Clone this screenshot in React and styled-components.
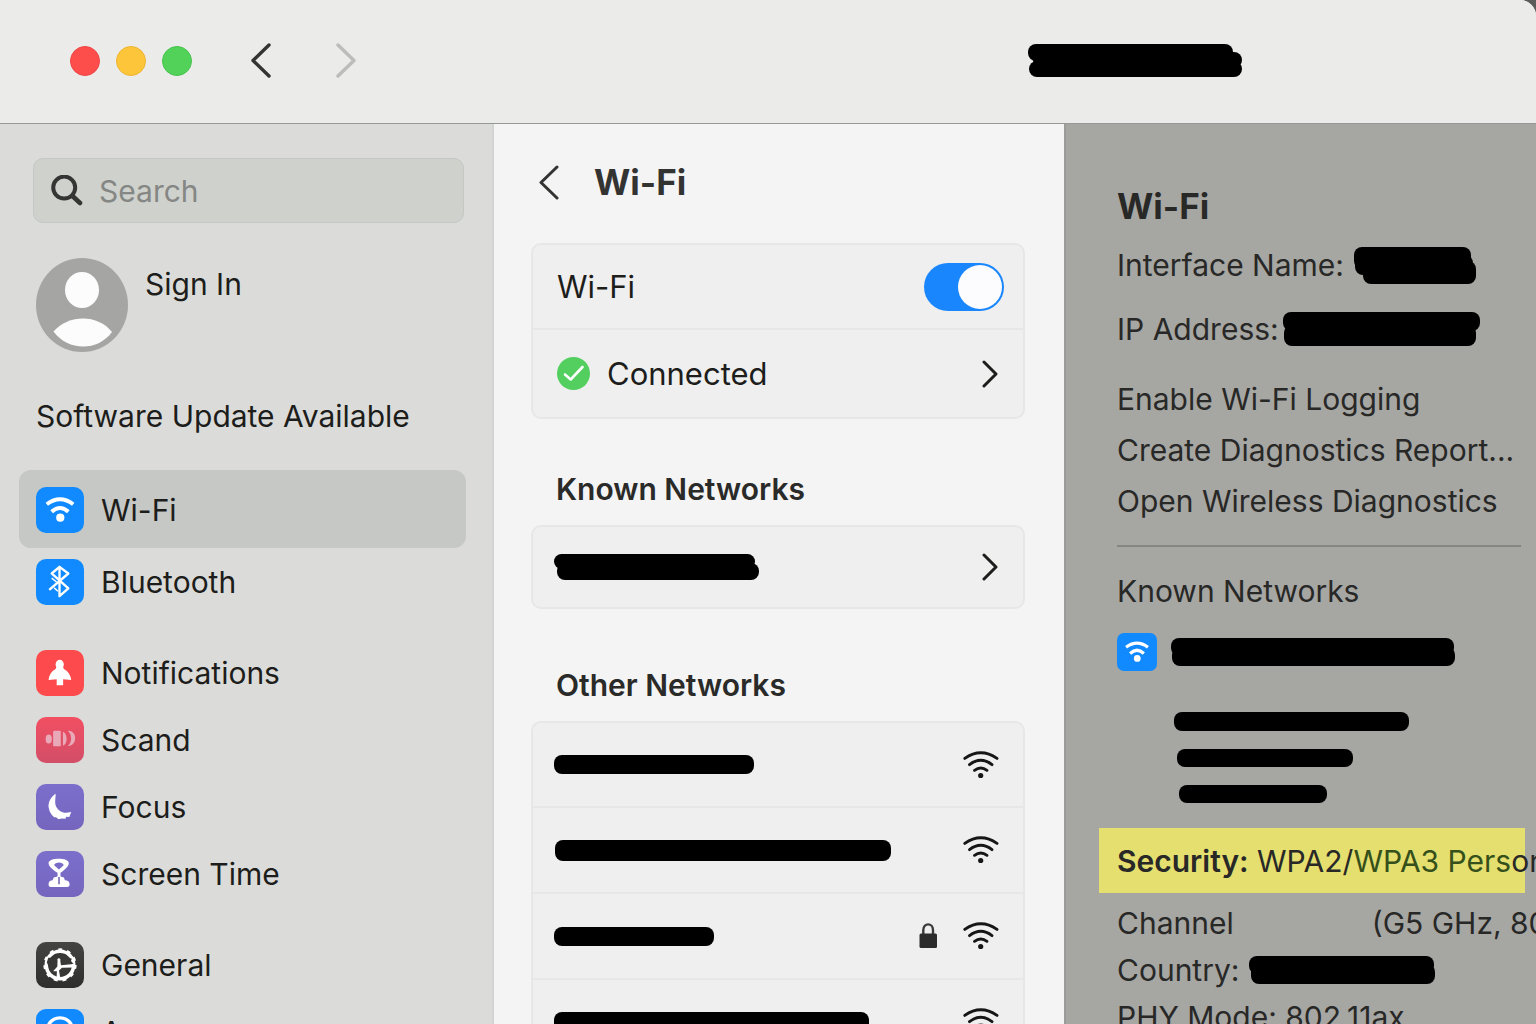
import React from "react";
import styled, { createGlobalStyle, css } from "styled-components";

const GlobalStyle = createGlobalStyle`
    * {
        box-sizing: border-box;
    }

    body {
        margin: 0;
        background-color: #5c5c5c;
        font-family: Inter, "Liberation Sans", sans-serif;
        font-size: 30px;
        line-height: 40px;
        color: #1d1d1b;
    }

    h1, h2, h3, p, ul {
        margin: 0;
        padding: 0;
    }

    button {
        padding: 0;
        border: 0;
        background: none;
        color: inherit;
        font: inherit;
        text-align: left;
        cursor: pointer;
    }
`;

const Window = styled.div`
    display: flex;
    flex-direction: column;
    height: 100vh;
    border-top-right-radius: 16px;
    background-color: #f4f4f4;
    overflow: hidden;
`;

const TitleBar = styled.header`
    display: flex;
    flex: none;
    align-items: center;
    height: 124px;
    padding: 0 294px 2px 70px;
    background-color: #ebebe9;
    border-bottom: 1px solid #969a97;
`;

const Lights = styled.div`
    display: flex;
    gap: 16px;
    margin-right: 59px;
`;

const Light = styled.button`
    width: 30px;
    height: 30px;
    border-radius: 50%;
    border: 1px solid ${(props) => props.$edge};
    background-color: ${(props) => props.$color};
`;

const HistoryButtons = styled.div`
    display: flex;
    gap: 65px;
    margin-right: auto;
`;

const IconButton = styled.button`
    display: flex;
    color: ${(props) => (props.disabled ? "#bcbcba" : "#333332")};
`;

const Body = styled.div`
    display: grid;
    flex: 1;
    grid-template-columns: 494px minmax(0, 1fr) 472px;
    min-height: 0;
`;

const Sidebar = styled.aside`
    padding: 34px 26px 0 19px;
    background-color: #dbdcd9;
    border-right: 2px solid #d2d4d1;
    overflow: hidden;
`;

const SearchBox = styled.label`
    display: flex;
    align-items: center;
    gap: 16px;
    height: 65px;
    margin: 0 2px 0 14px;
    padding: 0 17px;
    border: 1px solid #c4c7c4;
    border-radius: 10px;
    background-color: #cfd1cd;
`;

const SearchInput = styled.input`
    flex: 1;
    min-width: 0;
    padding: 0;
    border: 0;
    outline: none;
    background: none;
    color: #1d1d1b;
    font: inherit;

    &::placeholder {
        color: #858784;
        opacity: 1;
    }
`;

const Account = styled.button`
    display: flex;
    gap: 17px;
    margin: 35px 0 0 17px;
    line-height: 52px;
`;

const UpdateLink = styled.a`
    display: block;
    margin: 44px 0 34px 17px;
    color: inherit;
    text-decoration: none;
`;

const NavGroup = styled.ul`
    list-style: none;

    & + & {
        margin-top: 24px;
    }
`;

const NavLink = styled.a`
    display: flex;
    align-items: center;
    gap: 17px;
    height: 67px;
    padding-left: 17px;
    border-radius: 12px;
    color: inherit;
    text-decoration: none;

    ${(props) =>
        props.$active &&
        css`
            height: 78px;
            padding-top: 2px;
            background-color: #c6c8c5;
        `}
`;

const Tile = styled.span`
    display: flex;
    flex: none;
    width: ${(props) => (props.$small ? "40px" : "48px")};
    height: ${(props) => (props.$small ? "38px" : "46px")};
    border-radius: ${(props) => (props.$small ? "7px" : "10px")};
    background: ${(props) => props.$color};
`;

const Faded = styled.span`
    color: #e8e9e6;
`;

const Main = styled.main`
    padding: 35px 39px 0 37px;
    overflow: hidden;
`;

const PageHeader = styled.div`
    display: flex;
    align-items: center;
    gap: 35px;
    height: 46px;
    padding-left: 8px;
    margin-bottom: 38px;
`;

const Title = styled.h1`
    color: #333332;
    font-size: 35px;
    font-weight: 700;
    line-height: 46px;
`;

const SectionTitle = styled.h2`
    margin: ${(props) => props.$top} 0 16px 25px;
    color: #2a2a29;
    font-size: 30px;
    font-weight: 600;
    line-height: 40px;
`;

const Card = styled.div`
    border: 2px solid #e7e7e7;
    border-radius: 10px;
    background-color: #efefef;
    font-size: 31px;
`;

const rowStyle = css`
    display: flex;
    align-items: center;
    gap: 17px;
    width: 100%;
    height: 86px;
    padding: 0 25px 0 24px;

    & + & {
        border-top: 2px solid #e7e7e7;
    }

    &:first-child {
        height: 83px;
    }
`;

const SwitchRow = styled.label`
    ${rowStyle}
    padding-right: 19px;
`;

const Row = styled.button`
    ${rowStyle}

    ${SwitchRow} + & {
        height: 89px;
        border-top: 2px solid #e7e7e7;
    }
`;

const KnownRow = styled(Row)`
    padding-left: 20px;

    &:first-child {
        height: 80px;
    }
`;

const NetworkRow = styled(Row)`
    padding: 0 24px 0 20px;
    gap: 26px;
`;

const Grow = styled.span`
    display: flex;
    flex: 1;
`;

const Switch = styled.input`
    appearance: none;
    display: flex;
    width: 80px;
    height: 48px;
    margin: 0;
    padding: 2px;
    border-radius: 24px;
    background-color: #b9b9b9;
    cursor: pointer;

    &::before {
        content: "";
        width: 44px;
        height: 44px;
        border-radius: 50%;
        background-color: #fcfcfe;
    }

    &:checked {
        justify-content: flex-end;
        background-color: #1a86fd;
    }
`;

const Inspector = styled.aside`
    padding: 59px 0 0 51px;
    border-left: 2px solid #9b9b9a;
    background-color: #a6a6a3;
    color: #282827;
    white-space: nowrap;
    overflow: hidden;
`;

const InspectorTitle = styled.h2`
    margin-bottom: 16px;
    font-size: 35px;
    font-weight: 700;
    line-height: 46px;
`;

const Field = styled.p`
    display: flex;
    align-items: center;
    gap: ${(props) => props.$gap || "2px"};
    height: 40px;
    margin-bottom: ${(props) => props.$after || "7px"};
`;

const Actions = styled.div`
    display: flex;
    flex-direction: column;
    gap: 11px;
    padding: 6px 0 24px;
`;

const Divider = styled.hr`
    height: 2px;
    margin: 0 15px 24px 0;
    border: 0;
    background-color: #858583;
`;

const KnownNetwork = styled.div`
    display: flex;
    align-items: center;
    gap: 14px;
    margin: 22px 0 41px;
`;

const Details = styled.div`
    display: flex;
    flex-direction: column;
    gap: 18px;
    padding-left: 57px;
    margin-bottom: 25px;
`;

const Highlight = styled.p`
    height: 65px;
    margin: 0 11px 10px -18px;
    padding-left: 18px;
    background-color: #e4df6f;
    line-height: 66px;
`;

const Strong = styled.strong`
    font-weight: 600;
`;

const Green = styled.span`
    color: #35501a;
`;

// each stroke is [x, y, width, height], drawn as a rounded marker line
function Redaction({ strokes }) {
    const width = Math.max(...strokes.map(([x, , w]) => x + w));
    const height = Math.max(...strokes.map(([, y, , h]) => y + h));
    return (
        <svg width={width} height={height} aria-hidden="true">
            {strokes.map(([x, y, w, h], i) => (
                <rect key={i} x={x} y={y} width={w} height={h} rx={Math.min(8, h / 2)} />
            ))}
        </svg>
    );
}

function Chevron({ width, height, right, weight = 3 }) {
    const near = right ? 2 : width - 2;
    const far = right ? width - 2 : 2;
    return (
        <svg width={width} height={height} fill="none" stroke="currentColor" strokeWidth={weight} strokeLinecap="round" strokeLinejoin="round">
            <path d={`M${near} 2 L${far} ${height / 2} L${near} ${height - 2}`} />
        </svg>
    );
}

function SearchIcon() {
    return (
        <svg width="32" height="32" fill="none" stroke="#353634" strokeWidth="4" strokeLinecap="round">
            <circle cx="13.2" cy="12.6" r="11" />
            <path d="M21.5 21 L29 28" strokeWidth="4.6" />
        </svg>
    );
}

function Avatar() {
    return (
        <svg width="92" height="94" viewBox="0 0 92 94">
            <ellipse cx="46" cy="47" rx="46" ry="47" fill="#a5a5a3" />
            <ellipse cx="46" cy="32" rx="17" ry="18" fill="#fcfcfc" />
            <path d="M17.5 73.5 C33 56 62 56 76 74 C62 93.5 32 93.5 17.5 73.5 Z" fill="#fcfcfc" />
        </svg>
    );
}

function SignalIcon() {
    return (
        <svg width="36" height="28" fill="none" stroke="#161616" strokeWidth="2.9" strokeLinecap="round">
            <path d="M1.8 7.4 Q17.8 -3.8 34 7.4" />
            <path d="M6.5 13.6 Q17.8 5 29 13.6" />
            <path d="M11.5 19.3 Q17.8 14.5 24 19.3" />
            <circle cx="17.7" cy="24.5" r="2.6" fill="#161616" stroke="none" />
        </svg>
    );
}

function LockIcon() {
    return (
        <svg width="18" height="26" viewBox="0 0 18 26">
            <path d="M4.3 12 V7 C4.3 -0.5 14 -0.5 14 7 V12" fill="none" stroke="#3a3a3a" strokeWidth="2.4" />
            <rect x="0.5" y="10.5" width="17.500" height="14.500" rx="1.500" fill="#2c2c2c" />
        </svg>
    );
}

function CheckIcon() {
    return (
        <svg width="33" height="33" viewBox="0 0 33 33">
            <circle cx="16.5" cy="16.5" r="16.5" fill="#52cf5f" />
            <path d="M8 17.5 L13.7 22.5 L25.5 10" fill="none" stroke="#fff" strokeWidth="2.6" strokeLinecap="round" strokeLinejoin="round" />
        </svg>
    );
}

// glyphs share one 48 x 47 box, the size of the tile behind them
const glyphs = {
    wifi: (
        <>
            <path d="M10.5 17.6 Q24 7.4 37.5 17.6" fill="none" stroke="#fff" strokeWidth="4" />
            <path d="M15.5 25.3 Q24 17.5 32.5 25.3" fill="none" stroke="#fff" strokeWidth="4" />
            <circle cx="24.3" cy="31.4" r="4.2" fill="#fff" />
        </>
    ),
    bluetooth: (
        <g fill="none" stroke="#fff" strokeLinejoin="round">
            <path d="M13 31.5 L32.5 14.8 L23.5 8 V38 L32.5 30 L15.5 14.8 L23.5 8" strokeWidth="2.4" />
            <path d="M15.5 19.5 L20.5 23.5 M18 29.5 L22 33" strokeWidth="1.5" />
        </g>
    ),
    notifications: (
        <g fill="#fff">
            <ellipse cx="23.7" cy="14.8" rx="4.2" ry="4.8" />
            <path d="M20.5 17 L19.5 19.5 C15 22 12.6 26 12.3 30.7 L20.6 30 V36 H27.2 V30 L35.5 30.7 C35 26 32.6 22 28 19.5 L27 17 Z" />
        </g>
    ),
    sound: (
        <g fill="#e9a9b8">
            <ellipse cx="12.5" cy="22.5" rx="3.2" ry="4.6" />
            <rect x="17" y="14" width="7.8" height="16" rx="1" />
            <path d="M27 15 C32 17 32 27.5 27 29.5 Z" />
            <path d="M32 14 C42 13 42 30 32 29.5 C36.5 26 36.5 18 32 14 Z" />
        </g>
    ),
    moon: (
        <path
            d="M19.6 10 C14.5 13 12 19 12.3 23.5 L13.5 28 L15.5 31.5 L18 34 L20 34 L22.5 36 L26 35.3 L29.5 35.5 L30.5 33.5 L33.5 33.8 L35.5 28.5 L30.5 29.5 C25 29.5 20.5 26 19.3 21 C18.7 17 19.6 14 19.6 10 Z"
            fill="#fff"
        />
    ),
    hourglass: (
        <g fill="#fff">
            <path
                fillRule="evenodd"
                d="M22.7 8 C28 8 33 9.5 33 12.5 C33 16 27.5 20 24.5 22.3 V26 L28 27 L29 30 C32 30 33.8 31.5 33.8 34 C33.8 36 33 36.7 31.5 36.7 H14.5 C13 36.7 12.3 36 12.3 34 C12.3 31.5 14 30 16.5 30 L17.5 27 L21.5 26 V22.3 C18 20 12.3 16 12.3 12.5 C12.3 9.5 17.5 8 22.7 8 Z M18 14.5 L22.9 19 L27.8 14.5 C27 11 19 11 18 14.5 Z"
            />
            <path d="M23 26.5 V34" stroke="#5d51a6" strokeWidth="1.4" />
        </g>
    ),
    gear: (
        <>
            <circle cx="24" cy="23.5" r="14" fill="#383836" stroke="#fff" strokeWidth="3.6" />
            <circle cx="24" cy="23.5" r="15.8" fill="none" stroke="#fff" strokeWidth="2.4" strokeDasharray="4 5.03" />
            <path
                d="M12 16 L16 16 L18.500 12.500 L22 13.500 L24 11 L26.500 13.500 L30 12.500 L32 15.500 L36 17 L35 20 L38 22 L26 25.500 L24.800 19.500 A2.200 2.200 0 1 0 20.800 18 L21 25.500 L19 30.500 L14.500 29.500 L12.500 25 L10.500 21 Z"
                fill="#383836"
            />
            <path d="M22.700 16.500 C24.500 16.500 24.800 18 24.300 19.500 L25 23.800 L38 22.500 V26 L26 26.200 L23 29 L24.500 38 H20.500 L20.800 30 L17 30 L21.300 25 L21.500 19 C21 17.500 21.500 16.500 22.700 16.500 Z" fill="#fff" />
        </>
    ),
    appearance: (
        <g fill="none" stroke="#fff">
            <circle cx="24" cy="22" r="13" strokeWidth="3.4" />
            <path d="M21 20 Q25 16.5 29 19 M24.5 19 V28" strokeWidth="2" />
        </g>
    ),
};

function TileIcon({ name, color, small }) {
    return (
        <Tile $color={color} $small={small}>
            <svg width="100%" height="100%" viewBox="0 0 48 47">
                {glyphs[name]}
            </svg>
        </Tile>
    );
}

const BLUE = "#128aff";
const PURPLE = "linear-gradient(180deg, #7b6fcc, #7565be)";

const navGroups = [
    [
        { label: "Wi-Fi", icon: "wifi", color: BLUE, active: true },
        { label: "Bluetooth", icon: "bluetooth", color: BLUE },
    ],
    [
        { label: "Notifications", icon: "notifications", color: "#fd4a4d" },
        { label: "Scand", icon: "sound", color: "linear-gradient(180deg, #f24f62, #d24e68)" },
        { label: "Focus", icon: "moon", color: PURPLE },
        { label: "Screen Time", icon: "hourglass", color: PURPLE },
    ],
    [
        { label: "General", icon: "gear", color: "linear-gradient(180deg, #444442, #2e2e2d)" },
        { label: <>A<Faded>ppearance</Faded></>, icon: "appearance", color: BLUE },
    ],
];

const otherNetworks = [
    { strokes: [[1, 0, 200, 19]] },
    { strokes: [[2, 0, 336, 21]] },
    { strokes: [[1, 0, 160, 19]], locked: true },
    { strokes: [[1, 0, 315, 21]] },
];

export default function App() {
    return (
        <>
            <GlobalStyle />
            <Window>
                <TitleBar>
                    <Lights>
                        <Light aria-label="Close" $color="#fe4e4c" $edge="#ee4543" />
                        <Light aria-label="Minimize" $color="#fdc63a" $edge="#edb531" />
                        <Light aria-label="Zoom" $color="#53d259" $edge="#45c34c" />
                    </Lights>
                    <HistoryButtons>
                        <IconButton aria-label="Back">
                            <Chevron width={20} height={35} weight={3.4} />
                        </IconButton>
                        <IconButton aria-label="Forward" disabled>
                            <Chevron width={20} height={35} weight={3.4} right />
                        </IconButton>
                    </HistoryButtons>
                    <Redaction strokes={[[0, 0, 205, 17], [5, 8, 209, 16], [1, 17, 213, 16]]} />
                </TitleBar>
                <Body>
                    <Sidebar>
                        <SearchBox>
                            <SearchIcon />
                            <SearchInput type="search" placeholder="Search" aria-label="Search" />
                        </SearchBox>
                        <Account>
                            <Avatar />
                            Sign In
                        </Account>
                        <UpdateLink href="#update">Software Update Available</UpdateLink>
                        <nav>
                            {navGroups.map((group, i) => (
                                <NavGroup key={i}>
                                    {group.map((item) => (
                                        <li key={item.icon}>
                                            <NavLink href={`#${item.icon}`} $active={item.active}>
                                                <TileIcon name={item.icon} color={item.color} />
                                                <span>{item.label}</span>
                                            </NavLink>
                                        </li>
                                    ))}
                                </NavGroup>
                            ))}
                        </nav>
                    </Sidebar>
                    <Main>
                        <PageHeader>
                            <IconButton aria-label="Back">
                                <Chevron width={20} height={35} />
                            </IconButton>
                            <Title>Wi-Fi</Title>
                        </PageHeader>
                        <Card>
                            <SwitchRow>
                                <Grow>Wi-Fi</Grow>
                                <Switch type="checkbox" defaultChecked />
                            </SwitchRow>
                            <Row>
                                <CheckIcon />
                                <Grow>Connected</Grow>
                                <Chevron width={16} height={28} right />
                            </Row>
                        </Card>
                        <SectionTitle $top="50px">Known Networks</SectionTitle>
                        <Card>
                            <KnownRow aria-label="Known network">
                                <Grow>
                                    <Redaction strokes={[[1, 0, 201, 15], [4, 9, 202, 17]]} />
                                </Grow>
                                <Chevron width={16} height={28} right />
                            </KnownRow>
                        </Card>
                        <SectionTitle $top="56px">Other Networks</SectionTitle>
                        <Card>
                            {otherNetworks.map((network, i) => (
                                <NetworkRow key={i} aria-label={`Network ${i + 1}`}>
                                    <Grow>
                                        <Redaction strokes={network.strokes} />
                                    </Grow>
                                    {network.locked && <LockIcon />}
                                    <SignalIcon />
                                </NetworkRow>
                            ))}
                        </Card>
                    </Main>
                    <Inspector>
                        <InspectorTitle>Wi-Fi</InspectorTitle>
                        <Field $gap="10px" $after="24px">
                            Interface Name:
                            <Redaction strokes={[[0, 0, 117, 22], [1, 8, 118, 20], [9, 14, 113, 23]]} />
                        </Field>
                        <Field $gap="4px" $after="24px">
                            IP Address:
                            <Redaction strokes={[[0, 0, 197, 19], [1, 13, 192, 21]]} />
                        </Field>
                        <Actions>
                            <button>Enable Wi-Fi Logging</button>
                            <button>Create Diagnostics Report...</button>
                            <button>Open Wireless Diagnostics</button>
                        </Actions>
                        <Divider />
                        <p>Known Networks</p>
                        <KnownNetwork>
                            <TileIcon name="wifi" color={BLUE} small />
                            <Redaction strokes={[[0, 0, 283, 18], [1, 9, 283, 19]]} />
                        </KnownNetwork>
                        <Details>
                            <Redaction strokes={[[0, 0, 235, 19]]} />
                            <Redaction strokes={[[3, 0, 176, 18]]} />
                            <Redaction strokes={[[5, 0, 148, 18]]} />
                        </Details>
                        <Highlight>
                            <Strong>Security:</Strong> WPA2/<Green>WPA3 Pers</Green>on
                        </Highlight>
                        <Field $gap="138px">
                            <span>Channel</span>
                            <span>(G5 GHz, 80</span>
                        </Field>
                        <Field $gap="10px">
                            Country:
                            <Redaction strokes={[[0, 0, 185, 18], [2, 8, 184, 20]]} />
                        </Field>
                        <Field>PHY Mode: 802.11ax</Field>
                    </Inspector>
                </Body>
            </Window>
        </>
    );
}
